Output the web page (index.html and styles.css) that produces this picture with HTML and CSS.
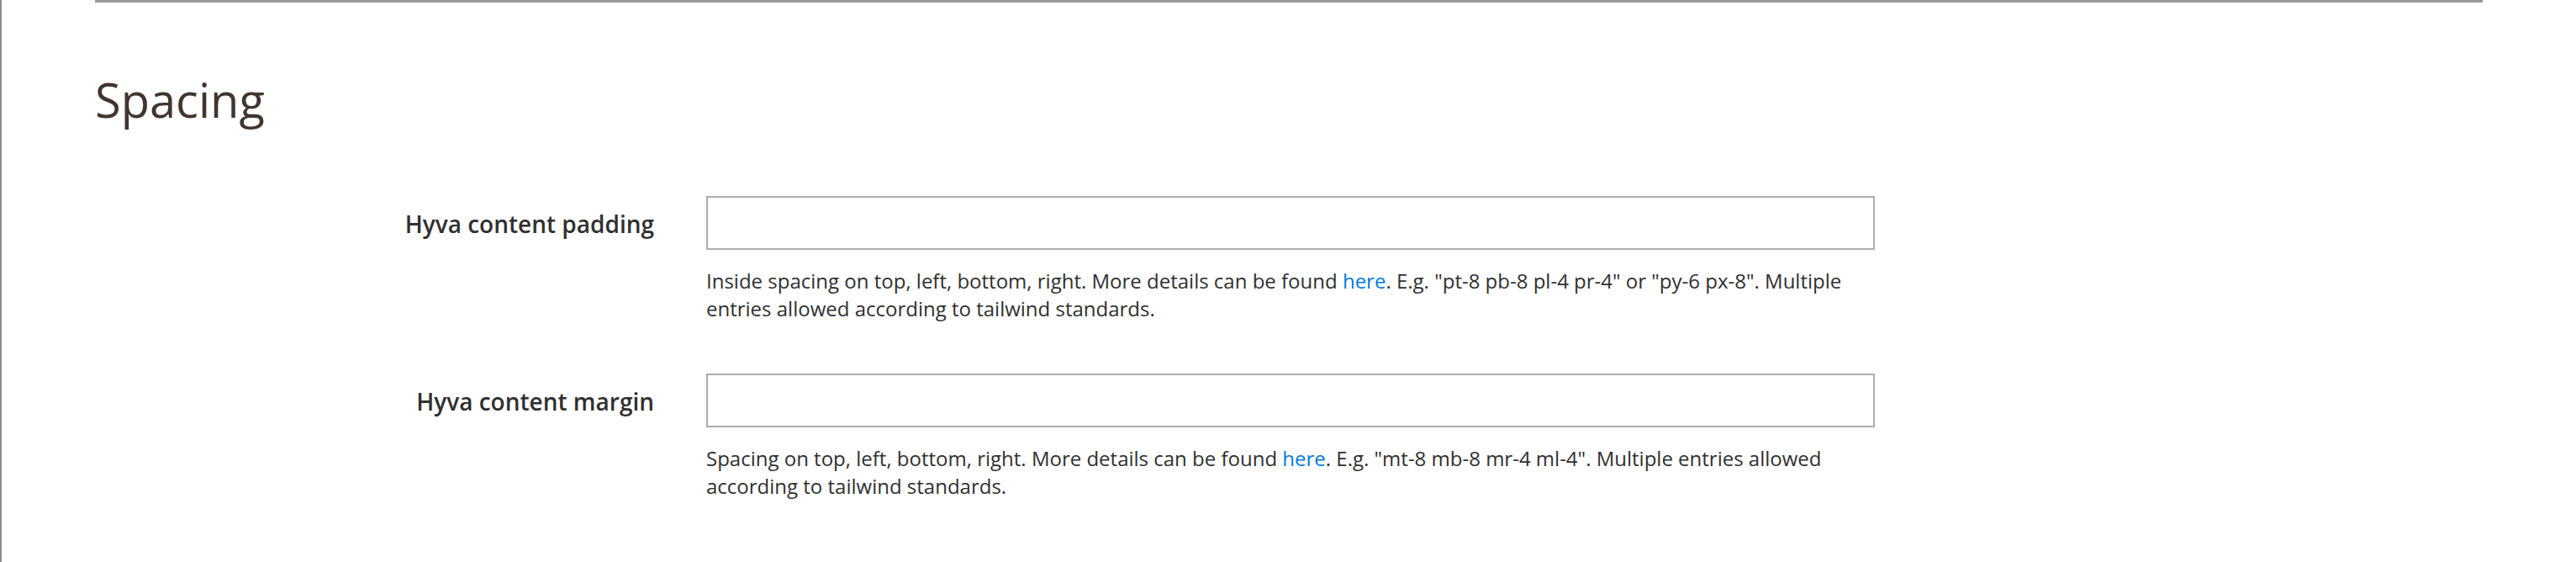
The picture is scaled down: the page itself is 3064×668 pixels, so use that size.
FILE: index.html
```html
<!DOCTYPE html>
<html lang="en">
<head>
    <meta charset="UTF-8">
    <meta name="viewport" content="width=device-width, initial-scale=1.0">
    <title>Spacing</title>
    <link rel="stylesheet" href="styles.css">
</head>
<body>
    <div class="page">
        <section class="fieldset">
            <h2 class="fieldset-title">Spacing</h2>

            <div class="field">
                <label class="field-label" for="hyvaPadding">Hyva content padding</label>
                <div class="field-control">
                    <input type="text" id="hyvaPadding" class="input-text">
                    <div class="field-note">
                        Inside spacing on top, left, bottom, right. More details can be found <a href="#">here</a>. E.g. "pt-8 pb-8 pl-4 pr-4" or "py-6 px-8". Multiple entries allowed according to tailwind standards.
                    </div>
                </div>
            </div>

            <div class="field">
                <label class="field-label" for="hyvaMargin">Hyva content margin</label>
                <div class="field-control">
                    <input type="text" id="hyvaMargin" class="input-text">
                    <div class="field-note">
                        Spacing on top, left, bottom, right. More details can be found <a href="#">here</a>. E.g. "mt-8 mb-8 mr-4 ml-4". Multiple entries allowed according to tailwind standards.
                    </div>
                </div>
            </div>
        </section>
    </div>
</body>
</html>
```

FILE: styles.css
```css
:root {
    --title-color: #41362f;
    --text-color: #303030;
    --link-color: #007bdb;
    --input-border: #adadad;
    --rule-color: #999;
}

html, body {
    margin: 0;
    padding: 0;
    background: #fff;
}

body {
    font-family: 'Open Sans', 'Noto Sans', sans-serif;
    color: var(--text-color);
}

.page {
    min-height: 100vh;
    border-left: 2px solid #8c8c8c;
    box-sizing: border-box;
}

.fieldset {
    margin: 0 111px 0 111px;
    border-top: 3px solid var(--rule-color);
}

.fieldset-title {
    margin: 82px 0 81px;
    font-size: 56px;
    font-weight: 400;
    line-height: 1.2;
    color: var(--title-color);
}

.field {
    display: grid;
    grid-template-columns: 665px 1390px;
    column-gap: 62px;
    margin-bottom: 61px;
}

.field-label {
    padding-top: 14px;
    text-align: right;
    font-size: 28px;
    font-weight: 600;
    line-height: 38px;
    color: var(--text-color);
}

.input-text {
    display: block;
    width: 100%;
    height: 64px;
    box-sizing: border-box;
    border: 2px solid var(--input-border);
    border-radius: 0;
    padding: 0 20px;
    font-family: inherit;
    font-size: 28px;
    background: #fff;
}

.field-note {
    margin-top: 20px;
    font-size: 24px;
    line-height: 33px;
    color: var(--text-color);
}

.field-note a {
    color: var(--link-color);
    text-decoration: none;
}
```
